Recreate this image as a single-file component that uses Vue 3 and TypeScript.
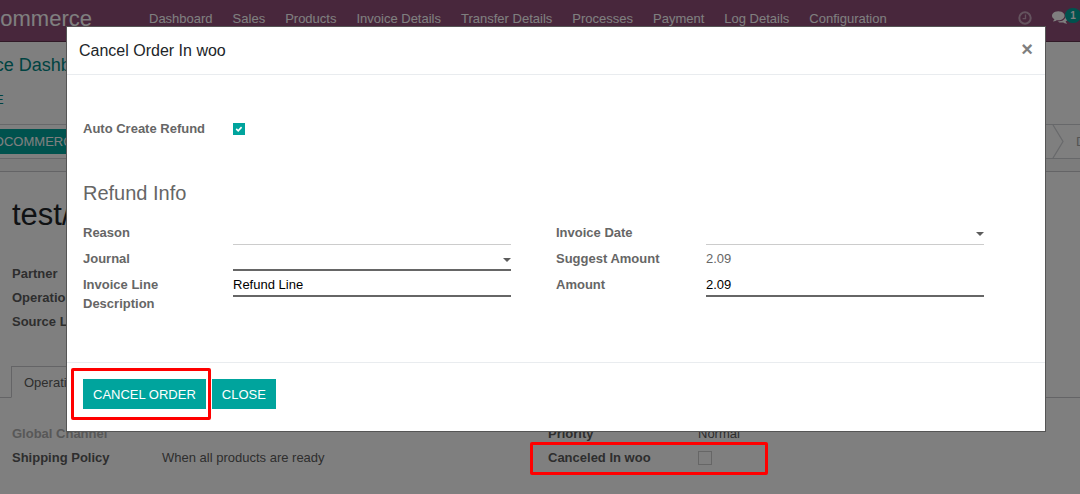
<script setup lang="ts">
import { ref } from 'vue'

const menu: string[] = [
  'Dashboard', 'Sales', 'Products', 'Invoice Details', 'Transfer Details',
  'Processes', 'Payment', 'Log Details', 'Configuration',
]
const orderFields: string[] = ['Partner', 'Operation Type', 'Source Location']

const open = ref(true)
const autoRefund = ref(true)
const canceledInWoo = ref(false)
const reason = ref('')
const journal = ref('')
const description = ref('Refund Line')
const invoiceDate = ref('')
const amount = ref('2.09')
</script>

<template>
  <div class="page">
    <nav class="navbar">
      <div class="brand"><span>WooCommerce</span></div>
      <div class="menu">
        <a v-for="item in menu" :key="item" href="#">{{ item }}</a>
      </div>
      <div class="systray">
        <button class="tray" type="button" aria-label="Activities">
          <svg class="clock" width="14" height="14" viewBox="0 0 14 14" fill="none" stroke="currentColor">
            <circle cx="7" cy="7" r="5.7" stroke-width="2" />
            <path d="M7.500 3.600V7.600H4.600" stroke-width="1.300" />
          </svg>
        </button>
        <button class="tray messages" type="button" aria-label="Messages">
          <svg width="16" height="14" viewBox="0 0 1792 1536" fill="currentColor">
            <path d="M1408 512q0 139-94 257t-256.500 186.500-353.500 68.500q-86 0-176-16-124 88-278 128-36 9-86 16h-3q-11 0-20.500-8t-11.500-21q-1-3-1-6.500t.5-6.500 2-6l2.500-5 3.500-5.500 4-5 4.500-5 4-4.500q5-6 23-25t26-29.500 22.500-29 25-38.500 20.500-44q-124-72-195-177t-71-224q0-139 94-257t256.500-186.500 353.500-68.500 353.500 68.500 256.500 186.500 94 257zm384 256q0 120-71 224.500t-195 176.500q10 24 20.500 44t25 38.500 22.500 29 26 29.500 23 25q1 1 4 4.500t4.500 5 4 5 3.500 5.500l2.500 5 2 6 .5 6.500-1 6.500q-3 14-13 22t-22 7q-50-7-86-16-154-40-278-128-90 16-176 16-271 0-472-132 58 4 88 4 161 0 309-45t264-129q125-92 192-212t67-254q0-77-23-152 129 71 204 178t75 230z" />
          </svg>
          <span class="badge">1</span>
        </button>
      </div>
    </nav>

    <header class="control">
      <a class="crumb" href="#">WooCommerce Dashboard</a>
      <button class="create" type="button">CREATE</button>
    </header>

    <div class="statusbar">
      <button class="status-action" type="button">CANCEL IN WOOCOMMERCE</button>
      <div class="stages">
        <svg width="12" height="33" viewBox="0 0 12 33" fill="none" stroke="#d2d4d8" stroke-width="1.3">
          <path d="M1 0L11 16.500L1 33" />
        </svg>
        <span>DONE</span>
      </div>
    </div>

    <main class="sheet">
      <h1>test/OUT/00012</h1>
      <div class="order-fields">
        <strong v-for="f in orderFields" :key="f">{{ f }}</strong>
      </div>
      <div class="tabs"><button class="tab" type="button">Operations</button></div>
      <div class="details">
        <div class="detail"><strong class="muted">Global Channel</strong></div>
        <div class="detail"><strong>Priority</strong><span>Normal</span></div>
        <div class="detail"><strong>Shipping Policy</strong><span>When all products are ready</span></div>
        <div class="detail marked">
          <label for="canceled">Canceled In woo</label>
          <input id="canceled" v-model="canceledInWoo" type="checkbox" class="plain-check" />
          <i class="mark mark-field"></i>
        </div>
      </div>
    </main>

    <div v-if="open" class="backdrop"></div>
    <section v-if="open" class="modal" role="dialog" aria-labelledby="dialog-title">
      <header class="modal-head">
        <h2 id="dialog-title">Cancel Order In woo</h2>
        <button class="close" type="button" aria-label="Dismiss" @click="open = false">×</button>
      </header>
      <div class="modal-body">
        <div class="field refund-toggle">
          <label for="auto">Auto Create Refund</label>
          <span class="check">
            <input id="auto" v-model="autoRefund" type="checkbox" />
            <svg v-if="autoRefund" width="8" height="8" viewBox="0 0 8 8" fill="none" stroke="#fff" stroke-width="1.6">
              <path d="M1.200 3.900L3.200 5.800L6.600 2.100" />
            </svg>
          </span>
        </div>
        <h3>Refund Info</h3>
        <div class="groups">
          <div class="group">
            <div class="field">
              <label for="reason">Reason</label>
              <input id="reason" v-model="reason" type="text" class="entry" />
            </div>
            <div class="field">
              <label for="journal">Journal</label>
              <span class="drop">
                <select id="journal" v-model="journal" class="entry required"><option value=""></option></select>
                <svg width="8" height="4" viewBox="0 0 8 4"><path d="M0 0H8L4 4Z" fill="#5c5c5c" /></svg>
              </span>
            </div>
            <div class="field">
              <label for="description">Invoice Line Description</label>
              <input id="description" v-model="description" type="text" class="entry required" />
            </div>
          </div>
          <div class="group">
            <div class="field">
              <label for="date">Invoice Date</label>
              <span class="drop">
                <input id="date" v-model="invoiceDate" type="text" class="entry" />
                <svg width="8" height="4" viewBox="0 0 8 4"><path d="M0 0H8L4 4Z" fill="#5c5c5c" /></svg>
              </span>
            </div>
            <div class="field">
              <span class="label">Suggest Amount</span>
              <span class="value">2.09</span>
            </div>
            <div class="field">
              <label for="amount">Amount</label>
              <input id="amount" v-model="amount" type="text" class="entry required" />
            </div>
          </div>
        </div>
      </div>
      <footer class="modal-foot">
        <span class="marked">
          <button class="primary" type="button">CANCEL ORDER</button>
          <i class="mark mark-button"></i>
        </span>
        <button class="primary" type="button" @click="open = false">CLOSE</button>
      </footer>
    </section>
  </div>
</template>

<style>
body {
  margin: 0;
}
</style>

<style scoped>
.page {
  position: relative;
  min-height: 100vh;
  overflow: hidden;
  background: #fff;
  color: #5c5c5c;
  font: 13px/19px "Liberation Sans", Arial, sans-serif;
}
.page * {
  box-sizing: border-box;
}
button,
input,
select {
  margin: 0;
  padding: 0;
  border: 0;
  border-radius: 0;
  background: none;
  color: inherit;
  font: inherit;
  appearance: none;
}
a {
  color: inherit;
  text-decoration: none;
}
h1,
h2,
h3 {
  margin: 0;
  font-weight: 400;
}

.navbar {
  display: flex;
  height: 42px;
  padding-right: 12px;
  background: #904e78;
  border-bottom: 1px solid #62354f;
  color: #fff;
  line-height: 37px;
  white-space: nowrap;
}
.brand {
  display: flex;
  justify-content: flex-end;
  width: 92px;
  font-size: 22px;
}
.menu {
  display: flex;
  flex: 1;
  gap: 20px;
  margin-left: 57px;
}
.systray {
  display: flex;
  align-items: flex-start;
  gap: 20px;
  padding-top: 10px;
}
.tray {
  position: relative;
  display: block;
  height: 16px;
  line-height: 16px;
}
.tray svg {
  display: block;
}
.clock {
  color: #c8a7bc;
}
.messages {
  color: #fff;
}
.badge {
  position: absolute;
  top: -2px;
  left: 13px;
  width: 16px;
  height: 15px;
  border-radius: 8px;
  background: #00a49d;
  font-size: 10px;
  font-weight: 700;
  line-height: 15px;
  text-align: center;
}

.control {
  display: flex;
  flex-direction: column;
  align-items: flex-start;
  gap: 15px;
  height: 82px;
  padding-top: 13px;
  white-space: nowrap;
}
.crumb {
  margin-left: -111px;
  color: #008784;
  font-size: 18px;
  line-height: 20px;
}
.create {
  margin-left: -48px;
  color: #008784;
}
.statusbar {
  display: flex;
  align-items: center;
  justify-content: space-between;
  height: 35px;
  border: solid #ced0d4;
  border-width: 1px 0;
}
.status-action {
  height: 25px;
  margin-left: -111px;
  padding: 0 10px;
  background: #00a49d;
  color: #fff;
  white-space: nowrap;
}
.stages {
  display: flex;
  align-items: center;
  gap: 12px;
  width: 28px;
  color: #a8a8a8;
}
.stages svg {
  flex: none;
}

.sheet {
  margin-top: 12px;
  padding-top: 26px;
  border-top: 1px solid #c8c8cc;
  box-shadow: 0 -12px 0 #f9f9f9;
}
h1 {
  padding-left: 12px;
  color: #212529;
  font-size: 31px;
  line-height: 34px;
}
.order-fields {
  display: grid;
  gap: 5px;
  margin-top: 32px;
  padding-left: 12px;
}
.tabs {
  display: flex;
  height: 32px;
  margin-top: 35px;
  padding-left: 11px;
  border-bottom: 1px solid #c8c8cc;
}
.tab {
  height: 32px;
  padding: 0 12px;
  border: 1px solid #c8c8cc;
  border-bottom-color: #fff;
}
.details {
  display: grid;
  grid-template-columns: 1fr 1fr;
  gap: 5px 0;
  margin-right: -4px;
  padding: 26px 0 24px 12px;
}
.detail {
  display: grid;
  grid-template-columns: 150px 1fr;
  align-items: center;
}
.detail label {
  font-weight: 700;
}
.muted {
  color: #b0b0b0;
}
.plain-check {
  width: 14px;
  height: 14px;
  border: 1px solid #ccc;
}

.marked {
  position: relative;
}
.mark {
  position: absolute;
  z-index: 5;
  border: 3px solid #f00;
  border-radius: 2px;
  pointer-events: none;
}
.mark-field {
  top: -6px;
  left: -18px;
  width: 238px;
  height: 33px;
}
.mark-button {
  inset: -11px -5px;
  left: -12px;
}

.backdrop {
  position: absolute;
  inset: 0;
  background: rgba(0, 0, 0, 0.5);
}
.modal {
  position: absolute;
  top: 26px;
  right: 34px;
  left: 66px;
  border: 1px solid #555;
  background: #fff;
  color: #666;
}
.modal-head {
  display: flex;
  align-items: center;
  justify-content: space-between;
  height: 48px;
  padding: 0 12px;
  border-bottom: 1px solid #e9ecef;
}
h2 {
  color: #212529;
  font-size: 16px;
}
.close {
  padding-bottom: 4px;
  color: #7f7f7f;
  font-size: 20px;
  font-weight: 700;
  line-height: 20px;
}
.modal-body {
  padding: 43px 16px 49px;
}
.field {
  display: grid;
  grid-template-columns: 150px minmax(0, 1fr);
  align-items: start;
}
.field label,
.label {
  padding: 1px 24px 0 0;
  font-weight: 700;
}
.value {
  padding-top: 1px;
}
.field .entry {
  display: block;
  width: 100%;
  height: 23px;
  border-bottom: 1px solid #ccc;
  color: #000;
}
.field .required {
  border-bottom: 2px solid #666;
}
.check {
  position: relative;
  width: 12px;
  height: 12px;
  margin-top: 5px;
}
.check input {
  display: block;
  width: 12px;
  height: 12px;
  border: 1px solid #00a49d;
}
.check input:checked {
  background: #00a49d;
}
.check svg {
  position: absolute;
  top: 2px;
  left: 2px;
  pointer-events: none;
}
h3 {
  margin-top: 43px;
  font-size: 20px;
  line-height: 24px;
}
.groups {
  display: grid;
  grid-template-columns: 1fr 1fr;
  margin-top: 17px;
}
.group {
  display: grid;
  grid-auto-rows: minmax(23px, auto);
  align-content: start;
  gap: 3px;
  padding-right: 45px;
}
.drop {
  position: relative;
}
.drop svg {
  position: absolute;
  top: 10px;
  right: 0;
  pointer-events: none;
}
.modal-foot {
  display: flex;
  gap: 6px;
  padding: 16px 16px 22px;
  border-top: 1px solid #e9ecef;
}
.primary {
  display: block;
  height: 30px;
  padding: 0 10px;
  background: #00a49d;
  color: #fff;
}
</style>
